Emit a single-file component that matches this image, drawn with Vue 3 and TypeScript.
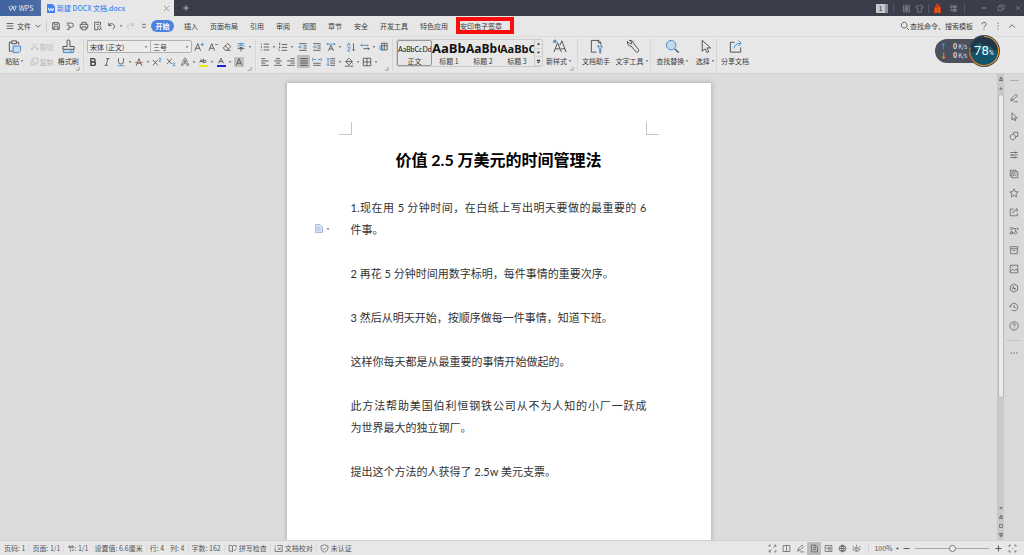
<script setup lang="ts">
import { h, ref } from 'vue'

interface Glyph { v?: number; d?: string; a?: string; f?: string; g?: string; w?: number; r?: string }

// d: outline, a: blue accent outline, g: pale blue fill, f: solid fill, r: red outline
const glyphs: Record<string, Glyph> = {
  wps: { v: 12, d: 'M1 3l2.4 6L6 4l2.6 5L11 3M3.5 3h3M6.5 6l2-3H11', w: 1.1 },
  menu: { d: 'M2 3h8M2 6h8M2 9h8' },
  chevron: { d: 'M3 4.5l3 3 3-3' },
  up: { d: 'M2.500 8L6 4.500 9.500 8' },
  save: { d: 'M2 2h7l1 1v7H2zM4 2v2.500h4V2M3.500 10V7h5v3' },
  output: { d: 'M2 2.500h5.500a2.500 2.500 0 0 1 0 5H5M5 5.500v4.500M2 5h3M2 10h3' },
  print: { d: 'M3.500 4V1.500h5V4M3.500 8.500H1.500V4h9v4.500h-2M3.500 7h5v3.500h-5z' },
  preview: { d: 'M9 5V1.500H2v9h4M7.500 6a2 2 0 1 0 .1 0M9 9.500l1.500 1.500M4 4h3' },
  undo: { d: 'M2 2v3.500h3.500M2.200 5.300A3.500 3.500 0 1 1 7 9.800' },
  redo: { d: 'M10 2v3.500H6.500M9.800 5.300A3.500 3.500 0 1 0 5 9.800' },
  more: { d: 'M4 4h4M4 6.500l2 2 2-2' },
  search: { d: 'M5 1.500a3.500 3.500 0 1 0 .1 0M7.800 7.800l3 3' },
  help: { d: 'M3.500 4a2.500 2.500 0 1 1 3.500 2.300Q6 6.800 6 8M6 9.500v1' },
  dots: { f: 'M5.500 2h1v1.200h-1zM5.500 5.500h1v1.200h-1zM5.500 9h1v1.200h-1z' },
  hdots: { f: 'M2 5.500h1.500v1H2zM5.300 5.500h1.500v1H5.300zM8.500 5.500H10v1H8.500z' },
  paste: { v: 16, d: 'M6 13H2.500V3.500h2M10.500 3.500h2V6M5 2h5v3H5z', a: 'M6.500 7.500h8v5l-2 2h-6z', g: 'M6.500 7.500h8v5l-2 2h-6z' },
  cut: { d: 'M2.500 2l6 6.500M9.500 2l-6 6.500M2.500 8a1.200 1.200 0 1 0 .1 0M9.500 8a1.200 1.200 0 1 0 .1 0' },
  copy: { d: 'M4 1.500h6.500V8H4zM4 4H1.500v6.500H8V8' },
  brush: { v: 16, d: 'M6.500 8V2.500a1.500 1.500 0 0 1 3 0V8H14v3H2V8z', a: 'M2.500 11v3.500h11V11M10.500 12v2', g: 'M2.500 11h11v3.500h-11z' },
  bigger: { d: 'M1 10.500L4.500 2 8 10.500M2.200 7.500h4.600', a: 'M8 3h4M10 1v4' },
  smaller: { d: 'M1 10.500L4.500 2 8 10.500M2.200 7.500h4.600', a: 'M8.500 3H12' },
  eraser: { d: 'M1.500 7L7 1.800 10.500 5.500 6 10H4zM4 4.500l3.700 4M6 10h4.500' },
  pinyin: { d: 'M4 6.500h4M2 8h8M6 6v5.500', a: 'M2 2h8M3 4h6M6 .8V4M2 6V4.500M10 6V4.500' },
  bold: { d: 'M3.500 2h3a2 2 0 0 1 0 4h-3zM3.500 6h3.500a2 2 0 0 1 0 4H3.500z', w: 1.6 },
  italic: { d: 'M5 2h4M3 10h4M7 2L5 10' },
  underline: { d: 'M3 1.500v4a3 3 0 0 0 6 0v-4', a: 'M2 10.500h8' },
  strike: { d: 'M2.500 10.500L6 2l3.500 8.500M4 7.500h4', r: 'M1 6.500h10' },
  sup: { d: 'M1 3.500l6 6.500M7 3.500L1 10', a: 'M8 2q2.500-1.500 2.500.5L8.500 5H11' },
  sub: { d: 'M1 2l6 6.500M7 2L1 8.500', a: 'M8 7.500q2.500-1.500 2.500.5l-2 2.500H11' },
  effect: { d: 'M1.500 10L5.200 1.500h1.600L10.500 10H8.500L7.800 8H4.200l-.7 2zM4.800 6.300h2.400L6 3.500z', w: .7 },
  marker: { d: 'M2 6.500L4 3l2 3.500M2.800 5.500h2.500M6.500 2v4.500h2a1 1 0 0 0 0-2.500h-2' },
  color: { d: 'M3 7.500L6 1.500l3 6M4 5.500h4' },
  shade: { d: 'M2.500 10L6 2l3.500 8M4 7.500h4' },
  bullets: { d: 'M4.500 2.500h6.500M4.500 6h6.500M4.500 9.500h6.500', f: 'M1 2h1.500v1H1zM1 5.500h1.500v1H1zM1 9h1.500v1H1z' },
  numbers: { d: 'M4.500 3h6.500M4.500 6.500h6.500M4.500 10h6.500M2 1v3M1 6h1.500L1 8M1 10h1.500' },
  outdent: { d: 'M1.500 2h9M6.500 4.700h4M6.500 7.300h4M1.500 10h9', a: 'M5 6H1M2.800 4.200L1 6l1.800 1.800' },
  indent: { d: 'M1.500 2h9M6.500 4.700h4M6.500 7.300h4M1.500 10h9', a: 'M1 6h4M3.200 4.200L5 6 3.200 7.800' },
  scale: { d: 'M3 10.500L6 4l3 6.500M4 8.500h4', a: 'M1 2.500h10M2.500 1L1 2.500 2.500 4M9.500 1L11 2.500 9.500 4' },
  sort: { d: 'M9 1.500v9M7.500 9L9 10.500 10.500 9', a: 'M1.500 5L3.200 1l1.700 4M2 6.800h3l-3 4h3' },
  tabs: { d: 'M4 8h7M9.500 6.500L11 8 9.500 9.500M7 4h3', a: 'M1 4h6M2.500 2.500L1 4l1.500 1.500' },
  frame: { d: 'M4 1.500h7v8H4zM4 4.500h7M7.500 1.500v8', a: 'M1 6h4v5M1 8.500h4' },
  left: { d: 'M1.500 2h5M1.500 4.700h9M1.500 7.300h5M1.500 10h9' },
  center: { d: 'M3.500 2h5M1.500 4.700h9M3.500 7.300h5M1.500 10h9' },
  right: { d: 'M5.500 2h5M1.500 4.700h9M5.500 7.300h5M1.500 10h9' },
  justify: { d: 'M1.500 2h9M1.500 4.700h9M1.500 7.300h9M1.500 10h9' },
  spread: { d: 'M1.500 7.500h9M1.500 10h9', a: 'M1 1v4M11 1v4M2 3h3M7 3h3' },
  spacing: { d: 'M5 2h6M5 4.700h6M5 7.300h6M5 10h6', a: 'M2.500 1.500v9M1.200 3l1.300-1.500L3.800 3M1.200 9l1.300 1.500L3.800 9' },
  bucket: { d: 'M2 5.500L6 1.500l4 4-4 4zM2 5.500h8M1 11h10', r: 'M10.500 7v2' },
  border: { d: 'M1.500 1.500h9v9h-9zM6 1.500v9M1.500 6h9' },
  newstyle: { v: 16, d: 'M2 14L6 4l4 10M3.500 10.500h5M8.500 6.500L10.500 2l4.500 12M9.500 10.500H14', a: 'M3 .5v4M1 2.500h4M1.600 1.100l2.800 2.800M4.400 1.100L1.600 3.900' },
  assistant: { v: 16, d: 'M8 14H2.500V1.500h8l2 2V6M10 1.500v2.500h2.500', a: 'M11.500 15v-4.500Q9 9.500 9.500 6.500l2 2 2-2Q14.500 9.500 12.500 10.500V15z', g: 'M11 15v-5l-1-2h4l-1 2v5z' },
  wrench: { v: 16, d: 'M2.500 2.500L5 5h2V3L4.700 1.500q4-.5 4.600 3.500l5 6q1 2-.8 3-1.500.5-2.500-1L6.500 7.500q-4 .5-4-5z' },
  find: { v: 16, a: 'M6.500 1.500a5 5 0 1 0 .1 0', g: 'M6.500 1.500a5 5 0 1 0 .1 0', d: 'M10.500 10.500l4 4', w: 1.4 },
  pointer: { v: 16, d: 'M4.500 1.500v11.500l3-2.500 2 4 2-1-2-4h4z' },
  share: { v: 16, d: 'M7 3.500H2.500v10.500h11V9', a: 'M6.500 10q0-5 7-5.500M11 1.500l3 3-3 3' },
  pen: { d: 'M2 9.500l1-3L8 1.500l2 2-5 5zM3 6.500l2 2M5.500 10.500h5' },
  cursor: { d: 'M3.500 1v8.500l2-1.700 1.300 2.700 1.500-.8L7 7.200h3z' },
  shapes: { d: 'M5.500 1.500h5v5H8M5.500 3.500v-2M4.500 4a3.200 3.200 0 1 0 .1 0' },
  sliders: { d: 'M1.500 3h9M1.500 6h9M1.500 9h9M8 1.800v2.400M4 4.800v2.400M7 7.800v2.400' },
  gallery: { d: 'M8.500 3.500v-2h-7v7h2M3.500 3.500h7v7h-7zM5 8.500l1.500-2 1.300 1.300L9 6.500M5 5.500h2' },
  star: { d: 'M6 1l1.500 3.300 3.500.4-2.600 2.400.7 3.500L6 8.900l-3.100 1.700.7-3.500L1 4.700l3.500-.4z' },
  export: { d: 'M5.500 2.500h-4v8h8.500V7M5 7.500q0-4 5.500-4M8.500 1.500l2 2-2 2' },
  links: { d: 'M3 1.500a1.500 1.500 0 1 0 .1 0M5 3h3v3M8 6.500a1.500 1.500 0 1 0 .1 0M1.500 7h2.500v2.500H1.500zM4 8.500h2M9 2.500h1.500V5' },
  box: { d: 'M1.500 2h9v2.500h-9zM2 4.500v6h8v-6M4.500 6.800h3' },
  image: { d: 'M1.500 1.500h9v9h-9zM1.500 9l3-3 2 2L8.500 6l2 2.500M4 3.500h.8' },
  badge: { d: 'M6 1l4.300 2.500v5L6 11 1.700 8.500v-5zM6 3.500L4 6.500h4L6 8.800M4.500 5L6 3.500' },
  history: { d: 'M1.500 6A4.500 4.500 0 1 1 3 9.500M.5 4.500L1.500 6 3 4.800M6 3.500V6.500h2' },
  question: { d: 'M6 1a5 5 0 1 0 .1 0M4.500 4.700a1.500 1.500 0 1 1 2 1.400Q6 6.400 6 7M6 8.200v.9' },
  spell: { d: 'M6 2.500v8M1.500 2h3L6 3l1.500-1h3.500v3M1.500 2v7.500H5L6 10.500M7 7.500L8.500 9 11.500 6' },
  proof: { d: 'M4 2h7v8H1.500V5M5.500 4.500l3.500 4M9 4.500l-3.500 4M1.500 2v1.500' },
  shield: { d: 'M6 1l4.500 1.500v4Q9.500 10 6 11 2.500 10 1.500 6.500v-4zM4 6l1.500 1.500L8.200 4.500' },
  full: { d: 'M1.500 4V1.500H4M8 1.500h2.500V4M10.500 8v2.500H8M4 10.500H1.500V8M10 2L7 5M2 10l3-3' },
  book: { d: 'M1.500 2h9v8h-9zM6 2v8' },
  doc: { d: 'M2 1.500h5.500L10 4v6.500H2zM4 5h4M4 7.500h4M7 1.500v3' },
  outline: { d: 'M1.500 2h9v8h-9zM3.500 4.500h1M5.500 4.500H9M3.500 6.200H9M5.500 8H9' },
  globe: { d: 'M6 1.500a4.500 4.500 0 1 0 .1 0M1.500 6h9M6 1.500Q2.500 6 6 10.500M6 1.500Q9.500 6 6 10.500M2.500 3.500h7M2.500 8.500h7' },
  eye: { d: 'M1 7q5-5.500 10 0-5 5.500-10 0M6 5.500a1.500 1.500 0 1 0 .1 0M2 4L1 2.500M6 3V1M10 4l1-1.500' },
  minus: { d: 'M2 6h8', w: 1.3 },
  plus: { d: 'M2 6h8M6 2v8', w: 1.3 },
  fit: { d: 'M1.500 4V1.500H4M8 1.500h2.500V4M10.500 8v2.500H8M4 10.500H1.500V8M5.500 6h1' },
  close: { d: 'M2.500 2.500l7 7M9.500 2.500l-7 7' },
  restore: { d: 'M1.500 4h6v6h-6zM4 4V1.500h6.500v6h-3' },
  skin: { d: 'M4 1.500L1 3.500l1 2 1.500-.5v5.500h5V5l1.500.5 1-2-3-2Q6 3 4 1.500z' },
  mail: { d: 'M2 1.500h8v9H2zM4 3.500h4v4H4zM4 5.500h4M6 3.500v4M3 9h6' },
  tri: { v: 6, f: 'M1 2h4L3 4.500z' },
  triup: { v: 6, f: 'M1 4.500h4L3 2z' },
  dbl: { v: 6, f: 'M1 3h4L3 .5zM1 3.500h4V5H1z' },
  dbldown: { v: 6, f: 'M1 3h4L3 5.500zM1 1h4v1.500H1z' },
  square: { v: 6, d: 'M1.500 1.500h3v3h-3z' },
  corner: { v: 6, d: 'M5 1v4H1' },
}

const Ico = (p: { n: string }) => {
  const g = glyphs[p.n]
  const v = g.v ?? 12
  const w = g.w ?? 0.9
  const kids = []
  if (g.g) kids.push(h('path', { d: g.g, fill: '#c3d9ee' }))
  if (g.d) kids.push(h('path', { d: g.d, fill: 'none', stroke: 'currentColor', 'stroke-width': w }))
  if (g.a) kids.push(h('path', { d: g.a, fill: 'none', stroke: '#3f87c9', 'stroke-width': 1 }))
  if (g.r) kids.push(h('path', { d: g.r, fill: 'none', stroke: '#cf6a62', 'stroke-width': 1 }))
  if (g.f) kids.push(h('path', { d: g.f, fill: 'currentColor' }))
  return h('svg', { class: 'ico', viewBox: `0 0 ${v} ${v}`, width: v, height: v, 'aria-hidden': 'true' }, kids)
}

interface Tool { n: string; label: string; caret?: boolean; on?: boolean }
const t = (n: string, label: string, caret = false, on = false): Tool => ({ n, label, caret, on })

const quick = [t('save', '保存'), t('output', '输出为PDF'), t('print', '打印'), t('preview', '打印预览'), t('undo', '撤销', true), t('redo', '恢复'), t('more', '更多')]
const tabs = ['插入', '页面布局', '引用', '审阅', '视图', '章节', '安全', '开发工具', '特色应用', '安印电子签章']
const fontTop = [t('bigger', '增大字号'), t('smaller', '减小字号'), t('eraser', '清除格式'), t('pinyin', '拼音指南', true)]
const fontBottom = [
  t('bold', '加粗'), t('italic', '倾斜'), t('underline', '下划线', true), t('strike', '删除线', true), t('sup', '上标'), t('sub', '下标'),
  t('effect', '文字效果', true), t('marker', '突出显示', true), t('color', '字体颜色', true), t('shade', '字符底纹'),
]
const paraTop = [
  [t('bullets', '项目符号', true), t('numbers', '编号', true)],
  [t('outdent', '减少缩进量'), t('indent', '增加缩进量'), t('scale', '中文版式', true)],
  [t('sort', '排序'), t('tabs', '制表位', true), t('frame', '显示标记')],
]
const paraBottom = [
  [t('left', '左对齐'), t('center', '居中'), t('right', '右对齐'), t('justify', '两端对齐', false, true), t('spread', '分散对齐')],
  [t('spacing', '行距', true), t('bucket', '底纹颜色', true), t('border', '边框', true)],
]
const styles = [
  { sample: 'AaBbCcDd', name: '正文', size: 'normal' },
  { sample: 'AaBb', name: '标题 1', size: 'h1' },
  { sample: 'AaBbC', name: '标题 2', size: 'h2' },
  { sample: 'AaBbC', name: '标题 3', size: 'h3' },
]
const side = ['pen', 'cursor', 'shapes', 'sliders', 'gallery', 'star', 'export', 'links', 'box', 'image', 'badge', 'history', 'question']
const sideLabels = ['编辑', '选择', '形状', '设置', '图库', '收藏', '分享', '关联', '归档', '图片', '会员', '历史', '帮助']
const views = [t('full', '全屏显示'), t('book', '阅读版式'), t('pen', '写作模式'), t('doc', '页面视图', false, true), t('outline', '大纲视图'), t('globe', 'Web版式'), t('eye', '护眼模式')]

const paragraphs: { text: string; full: boolean }[][] = [
  [{ text: '1.现在用 5 分钟时间，在白纸上写出明天要做的最重要的 6', full: true }, { text: '件事。', full: false }],
  [{ text: '2 再花 5 分钟时间用数字标明，每件事情的重要次序。', full: false }],
  [{ text: '3 然后从明天开始，按顺序做每一件事情，知道下班。', full: false }],
  [{ text: '这样你每天都是从最重要的事情开始做起的。', full: false }],
  [{ text: '此方法帮助美国伯利恒钢铁公司从不为人知的小厂一跃成', full: true }, { text: '为世界最大的独立钢厂。', full: false }],
  [{ text: '提出这个方法的人获得了 2.5w 美元支票。', full: false }],
]
const zoom = ref(50)
</script>

<template>
  <div class="app">
    <header class="titlebar">
      <button class="home"><Ico n="wps" />WPS</button>
      <div class="filetab">
        <svg class="fileicon" viewBox="0 0 8 9" width="8" height="9" aria-hidden="true"><path d="M0 0h5.500L8 2.500V9H0z" fill="#4384ef" /><path d="M1.500 4l1 3L4 4.500 5.500 7l1-3" fill="none" stroke="#fff" /></svg>
        <span class="filename">新建 DOCX 文档.docx</span>
        <button class="closetab" aria-label="关闭文档"><Ico n="close" /></button>
      </div>
      <button class="newtab" aria-label="新建"><Ico n="plus" /></button>
      <div class="system">
        <span class="count">1</span>
        <i class="vline"></i>
        <button aria-label="消息"><Ico n="mail" /></button>
        <button aria-label="皮肤"><Ico n="skin" /></button>
        <i class="vline"></i>
        <svg class="avatar" viewBox="0 0 9 10" width="9" height="10" aria-hidden="true"><path d="M4.500 0Q9 4 8 10H1Q0 4 4.500 0z" fill="#c83a12" /><path d="M3 10V5M6 10V4" stroke="#ee8a2c" /></svg>
        <span class="user">瑞</span>
        <i class="vline"></i>
        <button class="win" aria-label="最小化"><Ico n="minus" /></button>
        <button class="win" aria-label="还原"><Ico n="restore" /></button>
        <button class="win" aria-label="关闭"><Ico n="close" /></button>
      </div>
    </header>

    <nav class="menubar">
      <button class="file"><Ico n="menu" />文件<Ico n="chevron" /></button>
      <div class="quick">
        <button v-for="q in quick" :key="q.n" class="tool" :class="[q.n, { drop: q.caret }]" :aria-label="q.label"><Ico :n="q.n" /><Ico v-if="q.caret" n="tri" class="caret" /></button>
      </div>
      <button class="tab active">开始</button>
      <button v-for="name in tabs" :key="name" class="tab" :class="{ marked: name === '安印电子签章' }">{{ name }}</button>
      <div class="menuright">
        <button class="find"><Ico n="search" />查找命令、搜索模板</button>
        <button aria-label="帮助"><Ico n="help" /></button>
        <button aria-label="更多"><Ico n="dots" /></button>
        <button aria-label="收起功能区"><Ico n="up" /></button>
      </div>
    </nav>

    <section class="ribbon">
      <div class="group clipboard">
        <button class="big"><Ico n="paste" /><span>粘贴<Ico n="tri" class="caret" /></span></button>
        <div class="stack">
          <button class="small" disabled><Ico n="cut" />剪切</button>
          <button class="small" disabled><Ico n="copy" />复制</button>
        </div>
        <button class="big"><Ico n="brush" /><span>格式刷</span></button>
        <Ico n="corner" class="launcher" />
      </div>
      <div class="group font">
        <div class="line">
          <span class="pick family"><select aria-label="字体"><option>宋体 (正文)</option></select><Ico n="tri" class="caret" /></span>
          <span class="pick size"><select aria-label="字号"><option>三号</option></select><Ico n="tri" class="caret" /></span>
          <button v-for="b in fontTop" :key="b.n" class="tool" :class="{ drop: b.caret }" :aria-label="b.label"><Ico :n="b.n" /><Ico v-if="b.caret" n="tri" class="caret" /></button>
        </div>
        <div class="line">
          <button v-for="b in fontBottom" :key="b.n" class="tool" :class="[b.n, { drop: b.caret }]" :aria-label="b.label"><Ico :n="b.n" /><Ico v-if="b.caret" n="tri" class="caret" /></button>
        </div>
        <Ico n="corner" class="launcher" />
      </div>
      <div class="group para">
        <div class="line spaced">
          <div v-for="(set, i) in paraTop" :key="i" class="set">
            <button v-for="b in set" :key="b.n" class="tool" :class="{ drop: b.caret }" :aria-label="b.label"><Ico :n="b.n" /><Ico v-if="b.caret" n="tri" class="caret" /></button>
          </div>
        </div>
        <div class="line">
          <div v-for="(set, i) in paraBottom" :key="i" class="set" :class="{ aligns: i === 0 }">
            <button v-for="b in set" :key="b.n" class="tool" :class="{ drop: b.caret, on: b.on }" :aria-label="b.label"><Ico :n="b.n" /><Ico v-if="b.caret" n="tri" class="caret" /></button>
          </div>
        </div>
        <Ico n="corner" class="launcher" />
      </div>
      <div class="group styles">
        <div class="gallery">
          <button v-for="s in styles" :key="s.name" class="style" :class="s.size"><span class="sample">{{ s.sample }}</span><span>{{ s.name }}</span></button>
          <div class="spin">
            <button aria-label="上一行"><Ico n="triup" /></button>
            <button aria-label="下一行"><Ico n="tri" /></button>
            <button aria-label="展开"><Ico n="dbldown" /></button>
          </div>
        </div>
        <button class="big"><Ico n="newstyle" /><span>新样式<Ico n="tri" class="caret" /></span></button>
        <Ico n="corner" class="launcher" />
      </div>
      <div class="group wide">
        <button class="big"><Ico n="assistant" /><span>文档助手</span></button>
        <button class="big"><Ico n="wrench" /><span>文字工具<Ico n="tri" class="caret" /></span></button>
      </div>
      <div class="group search">
        <button class="big"><Ico n="find" /><span>查找替换<Ico n="tri" class="caret" /></span></button>
        <button class="big"><Ico n="pointer" /><span>选择<Ico n="tri" class="caret" /></span></button>
      </div>
      <div class="group last">
        <button class="big"><Ico n="share" /><span>分享文档</span></button>
      </div>
    </section>

    <main class="work">
      <div class="desk">
        <article class="page">
          <div class="marks"><i class="mark start"></i><i class="mark end"></i></div>
          <h1>价值 2.5 万美元的时间管理法</h1>
          <div class="body">
            <p v-for="(p, i) in paragraphs" :key="i"><span v-for="l in p" :key="l.text" class="row" :class="{ full: l.full }">{{ l.text }}</span></p>
          </div>
          <button class="gutter" aria-label="段落布局">
            <svg viewBox="0 0 8 9" width="8" height="9" aria-hidden="true"><path d="M.5.5h4.500l2.500 2.500v5.500h-7zM2 4h3M2 6h4" fill="#d6e2f6" stroke="#a5bbe4" /></svg>
            <Ico n="tri" class="caret" />
          </button>
        </article>
      </div>
      <div class="scroll">
        <Ico n="dbl" /><Ico n="triup" />
        <span class="thumb"></span>
        <span class="track"></span>
        <Ico n="tri" /><Ico n="dbl" /><Ico n="square" /><Ico n="dbldown" />
      </div>
      <aside class="side">
        <i class="grip"></i>
        <button v-for="(s, i) in side" :key="s" :aria-label="sideLabels[i]"><Ico :n="s" /></button>
        <button class="sidemore" aria-label="更多"><Ico n="hdots" /></button>
      </aside>
    </main>

    <footer class="status">
      <span class="cell">页码: 1</span>
      <span class="cell">页面: 1/1</span>
      <span class="cell plain">节: 1/1</span>
      <span class="cell">设置值: 6.6厘米</span>
      <span class="cell plain">行: 4</span>
      <span class="cell">列: 4</span>
      <span class="cell">字数: 162</span>
      <button class="cell"><Ico n="spell" />拼写检查</button>
      <button class="cell"><Ico n="proof" />文档校对</button>
      <button class="cell plain"><Ico n="shield" />未认证</button>
      <div class="views">
        <button v-for="v in views" :key="v.n" class="tool" :class="{ on: v.on }" :aria-label="v.label"><Ico :n="v.n" /></button>
        <i class="vline"></i>
        <button class="percent">100%<Ico n="tri" /></button>
        <button class="tool" aria-label="缩小"><Ico n="minus" /></button>
        <input v-model="zoom" type="range" min="0" max="100" aria-label="显示比例" />
        <button class="tool" aria-label="放大"><Ico n="plus" /></button>
        <button class="tool" aria-label="适合页面"><Ico n="fit" /></button>
      </div>
    </footer>

    <div class="meter">
      <div class="rates">
        <span><b class="upload">↑</b>0<small>K/s</small></span>
        <span><b class="download">↓</b>0<small>K/s</small></span>
      </div>
      <div class="ring">
        <svg viewBox="0 0 32 32" width="32" height="32" aria-hidden="true">
          <circle cx="16" cy="16" r="16" fill="#3f4a52" />
          <circle cx="16" cy="16" r="14" fill="#14546d" />
          <path d="M2 16a14 14 0 0 1 28-1q-4 2-8-1t-9 1-11 1z" fill="#21384a" />
          <path d="M6 13q3-6 8-4l-2 3q5-3 11 0l3 4q-6-3-10 0z" fill="#1e6772" />
          <path d="M16 1.500a14.500 14.500 0 1 1-14 11" fill="none" stroke="#d98a2b" stroke-width="1.200" />
          <path d="M6 26.500a14.500 14.500 0 0 1-4.500-12" fill="none" stroke="#d9592f" stroke-width="1.200" />
        </svg>
        <span class="value">78<small>%</small></span>
      </div>
    </div>
  </div>
</template>

<style>
html, body { margin: 0; overflow: hidden; }
</style>

<style scoped>
.app { position: relative; display: flex; flex-direction: column; height: 100vh; overflow: hidden; background: #e7e7e7; color: #3c3c3c; font: 7px/10px "Noto Sans CJK SC", sans-serif; }
.app * { box-sizing: border-box; }
button { display: inline-flex; align-items: center; justify-content: center; margin: 0; padding: 0; border: 0; background: none; color: inherit; font: inherit; white-space: nowrap; }
.ico { flex: none; display: block; }
.caret { width: 4px; height: 4px; color: #666; }
.vline { width: 1px; height: 9px; background: #555866; }

.titlebar { flex: none; display: flex; align-items: stretch; height: 16px; background: #3b3d4b; color: #c9cbd2; }
.home { width: 41px; gap: 2px; background: linear-gradient(90deg, #3f649f, #4b6ca4); color: #e4e9f2; }
.home .ico { width: 9px; height: 9px; }
.filetab { display: flex; align-items: center; width: 133px; padding: 0 3px 0 6px; gap: 2px; background: #e7e7e7; color: #4384ef; }
.filename { flex: 1; font-weight: 500; white-space: nowrap; }
.closetab { color: #777; }
.closetab .ico { width: 9px; height: 9px; }
.newtab { width: 24px; color: #cfd0d5; }
.newtab .ico { width: 8px; height: 8px; }
.system { display: flex; align-items: center; margin-left: auto; gap: 4px; color: #8b8d97; }
.system .ico { width: 9px; height: 9px; }
.count { width: 12px; height: 9px; margin-right: 1px; border-right: 3px solid #93959c; background: #c9cace; color: #33343c; line-height: 9px; text-align: center; }
.system .vline + button { margin-left: 4px; }
.user { margin: 0 3px 0 4px; color: #9b9da6; }
.system .win { width: 13px; }
.system .vline + .win { margin-left: 8px; }
.system .win .ico { width: 8px; height: 8px; }

.menubar { flex: none; display: flex; align-items: center; height: 21px; border-bottom: 1px solid #dcdcdc; }
.file { gap: 2px; width: 47px; height: 12px; padding-left: 2px; border-right: 1px solid #cccccc; }
.file .ico { width: 10px; height: 10px; }
.quick { display: flex; width: 104px; padding-left: 2px; }
.tool { width: 14px; height: 13px; }
.tool .ico { width: 10px; height: 10px; }
.tool.drop { width: 18px; padding-left: 2px; justify-content: flex-start; gap: 2px; }
.tool .caret { width: 4px; height: 4px; }
.redo { color: #b8b8b8; }
.tab { position: relative; height: 12px; margin-right: 12px; }
.tab.active { width: 23px; margin-right: 10px; border-radius: 6px; background: #4d82e0; color: #fff; font-weight: 700; }
.marked::after { content: ""; position: absolute; inset: -3px -12px -2px -4px; border: 4px solid #fb0d0d; }
.menuright { display: flex; align-items: center; gap: 4px; margin-left: auto; padding-right: 7px; }
.menuright .ico { width: 10px; height: 10px; }
.find { margin-right: 2px; }

.ribbon { flex: none; display: flex; height: 37px; padding: 2px 0; border-bottom: 1px solid #cfcfcf; }
.group { position: relative; display: flex; border-right: 1px solid #d6d6d6; }
.launcher { position: absolute; right: 3px; bottom: 0; width: 5px; height: 5px; color: #888; }
.big { flex-direction: column; justify-content: flex-start; gap: 3px; }
.big .ico { width: 15px; height: 15px; }
.big span { display: flex; align-items: center; gap: 1px; height: 8px; line-height: 8px; }
.big .caret { width: 4px; height: 4px; }
.clipboard { width: 84px; }
.clipboard .big { width: 30px; }
.stack { display: flex; flex-direction: column; width: 24px; }
.small { height: 15px; gap: 1px; color: #b4b4b4; }
.small .ico { width: 9px; height: 9px; }
.font, .para { flex-direction: column; padding: 0 2px; }
.font { width: 172px; }
.para { width: 137px; }
.line, .set { display: flex; align-items: center; }
.line { height: 15px; }
.spaced { gap: 2px; }
.aligns .tool { width: 13px; }
.aligns { margin-right: 1px; }
.tool.on { border-radius: 1px; background: #bcbcbc; }
.pick { position: relative; display: flex; height: 13px; border: 1px solid #b2b2b2; background: #ececec; }
.pick.family { width: 63px; margin-left: 1px; border-right: 0; border-radius: 2px 0 0 2px; }
.pick.size { width: 42px; border-radius: 0 2px 2px 0; }
.pick select { width: 100%; padding: 0 2px; border: 0; outline: 0; appearance: none; background: none; color: #333; font: inherit; }
.pick .caret { position: absolute; right: 2px; top: 4px; }
.marker, .color { background: linear-gradient(#f2e500, #f2e500) 3px 10px / 9px 2px no-repeat; }
.color { background-image: linear-gradient(#1f1fe0, #1f1fe0); }
.shade .ico { background: #c0c0c0; }
.styles { width: 185px; padding-left: 3px; }
.gallery { display: flex; width: 147px; height: 28px; border: 1px solid #cccccc; border-radius: 2px; }
.style { flex-direction: column; justify-content: space-between; width: 34px; padding-bottom: 1px; overflow: hidden; line-height: 8px; }
.style.normal { width: 35px; border: 1px solid #969696; border-radius: 2px; padding-bottom: 0; }
.sample { display: block; width: 100%; height: 17px; overflow: hidden; color: #111; font: 700 13px/17px "Open Sans", "Noto Sans", sans-serif; text-align: left; }
.normal .sample { font: 400 7px/17px Lato, sans-serif; text-align: center; }
.h2 .sample { font-size: 12px; }
.h3 .sample { font-size: 11px; }
.spin { display: flex; flex-direction: column; flex: 1; border-left: 1px solid #cccccc; }
.spin button { flex: 1; border-bottom: 1px solid #d4d4d4; }
.spin .ico { width: 5px; height: 5px; }
.styles .big { flex: 1; padding-right: 2px; }
.wide { width: 73px; }
.wide .big, .search .big { flex: 1; }
.search { width: 66px; }
.search .big:first-child { flex: 2; }
.last { border: 0; }
.last .big { width: 36px; }

.work { flex: 1; display: flex; min-height: 0; background: #d9d9d9; }
.desk { flex: 1; display: flex; justify-content: center; padding-top: 9px; overflow: hidden; background: #dcdcdc; }
.page { position: relative; width: 424px; padding: 39px 52px 0; background: #fff; box-shadow: 0 0 4px 1px #b4b4b4; }
.marks { display: flex; justify-content: space-between; }
.mark { width: 13px; height: 13px; border-bottom: 1px solid #c6c6c6; }
.start { border-right: 1px solid #c6c6c6; }
.end { border-left: 1px solid #c6c6c6; }
h1 { margin: 14px 0 26px; color: #000; font: 700 16px/22px Lato, "Noto Sans CJK SC", sans-serif; text-align: center; }
.body { display: flex; flex-direction: column; gap: 22px; padding: 0 12px; color: #333; font: 11px/22px Lato, "Noto Sans CJK SC", sans-serif; }
p { margin: 0; }
.row { display: block; white-space: nowrap; }
.full { white-space: normal; text-align: justify; text-align-last: justify; }
.gutter { position: absolute; left: 28px; top: 141px; gap: 3px; }
.scroll { display: flex; flex-direction: column; align-items: center; gap: 3px; width: 7px; padding: 2px 0; background: #c9c9c9; color: #777; }
.scroll .ico { width: 6px; height: 6px; }
.thumb { flex: 3; width: 6px; border: 1px solid #b9b9b9; border-radius: 3px; background: #ebebeb; }
.track { flex: 1; }
.side { display: flex; flex-direction: column; align-items: center; width: 20px; padding-top: 6px; color: #5b5b5b; background: #d9d9d9; }
.grip { width: 9px; height: 1px; margin-bottom: 7px; background: #b0b0b0; }
.side button { height: 19px; }
.side .ico { width: 10px; height: 10px; }
.side .sidemore { width: 16px; margin-top: 5px; border-top: 1px solid #c4c4c4; height: 24px; }

.status { flex: none; display: flex; align-items: center; height: 15px; padding-left: 1px; border-top: 1px solid #d2d2d2; color: #555; }
.cell { display: inline-flex; align-items: center; gap: 2px; height: 10px; padding: 0 3px; border-right: 1px solid #dadada; white-space: nowrap; }
.cell.plain { border-right-color: transparent; padding-right: 2px; }
.cell .ico { width: 9px; height: 9px; }
.views { display: flex; align-items: center; margin-left: auto; padding-right: 5px; }
.views .tool .ico { width: 9px; height: 9px; }
.views .vline { margin: 0 6px 0 5px; background: #d6d6d6; }
.percent { gap: 2px; width: 24px; }
.percent .ico { width: 5px; height: 5px; }
input[type="range"] { width: 74px; height: 10px; margin: 0 2px; appearance: none; background: linear-gradient(#a8a8a8, #a8a8a8) 0 5px / 100% 1px no-repeat; }
input[type="range"]::-webkit-slider-thumb { width: 7px; height: 7px; appearance: none; border: 1px solid #777; border-radius: 50%; background: #f0f0f0; }

.meter { position: absolute; top: 35px; right: 24px; display: flex; align-items: center; width: 65px; height: 32px; }
.rates { display: flex; flex-direction: column; justify-content: center; width: 50px; height: 24px; padding-left: 5px; border-radius: 12px; background: #4b505c; color: #dedfe2; line-height: 9px; }
.rates span { display: flex; gap: 1px; font-weight: 700; }
.rates b { width: 12px; font-weight: 700; }
.rates small { font-size: 6px; font-weight: 400; }
.upload { color: #26a5ee; }
.download { color: #f39a1d; }
.ring { position: absolute; right: 0; top: 0; width: 32px; height: 32px; }
.value { position: absolute; inset: 0; color: #eef6f8; font: 13px/32px Roboto, sans-serif; text-align: center; }
.value small { font-size: 7px; }
</style>
